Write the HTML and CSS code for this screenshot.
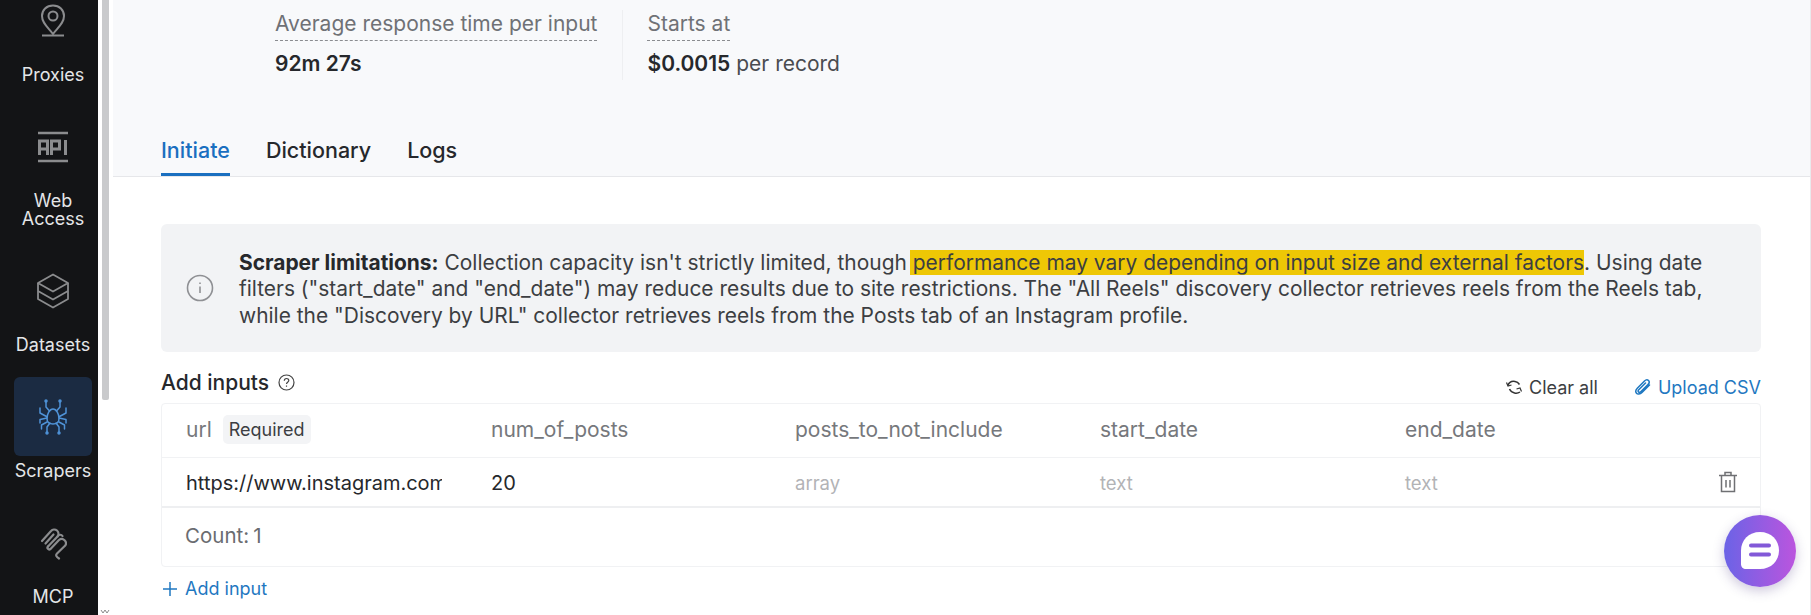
FILE: index.html
```html
<!DOCTYPE html>
<html lang="en">
<head>
  <meta charset="UTF-8">
  <title>Scraper</title>
  <link rel="stylesheet" href="styles.css">
</head>
<body>

<nav class="sidebar">
  <div class="nav-item">
    <div class="nav-tile">
      <svg width="26" height="33" viewBox="0 0 26 33" fill="none" stroke="#8b8c8e" stroke-width="2"><path d="M13 1.500C6.500 1.500 2 6 2 12c0 7 6 11.500 11 18 5-6.500 11-11 11-18 0-6-4.500-10.500-11-10.500z"/><circle cx="13" cy="12" r="4.500"/><path d="M2 31.500h22"/></svg>
    </div>
    <span class="nav-label">Proxies</span>
  </div>
  <div class="nav-item two-line">
    <div class="nav-tile">
      <svg width="32" height="32" viewBox="0 0 32 32" fill="none" stroke="#8b8c8e" stroke-width="2.400"><path d="M1 2h30M1 30h30"/><path d="M2.500 24V10h8v14M2.500 18h8M14.500 24V10h8v8h-8M28.500 9v15" stroke-width="3"/></svg>
    </div>
    <span class="nav-label">Web<br>Access</span>
  </div>
  <div class="nav-item">
    <div class="nav-tile">
      <svg width="34" height="36" viewBox="0 0 34 36" fill="none" stroke="#8b8c8e" stroke-width="1.800" stroke-linejoin="round"><path d="M17 1.500L32 10 17 18.500 2 10z"/><path d="M2 10v16l15 8.500L32 26V10"/><path d="M2 18l15 8.500L32 18"/></svg>
    </div>
    <span class="nav-label">Datasets</span>
  </div>
  <div class="nav-item active">
    <div class="nav-tile">
      <svg width="30" height="36" viewBox="0 0 30 36" fill="none" stroke="#4f93d8" stroke-width="1.500" stroke-linecap="round" stroke-linejoin="round"><path d="M15 10c-3.500 0-6 5-6 9.500 0 3.500 2.500 5.500 6 5.500s6-2 6-5.500C21 15 18.500 10 15 10z"/><path d="M8 2v6l3.500 4M22 2v6l-3.500 4M2 9v5l6.500 3.500M28 9v5l-6.500 3.500M2 24v-3.500L9 19M28 24v-3.500L21 19M3.500 30v-4l5.500-3M26.500 30v-4L21 23M9 34v-6l3-4M21 34v-6l-3-4"/><circle cx="8" cy="2" r="1"/><circle cx="22" cy="2" r="1"/><circle cx="9" cy="34" r="1"/><circle cx="21" cy="34" r="1"/></svg>
    </div>
    <span class="nav-label">Scrapers</span>
  </div>
  <div class="nav-item">
    <div class="nav-tile">
      <svg width="27" height="34" viewBox="0 0 27 34" fill="none" stroke="#8b8c8e" stroke-width="2.200" stroke-linecap="round" stroke-linejoin="round"><path d="M2 15l9-10a4.200 4.200 0 0 1 6.500 5.500L8 20.500"/><path d="M8 20.500c-1.500 1.500.5 4 2.500 2.500L19 14a4.200 4.200 0 0 1 6 5.800L17 27.500c-1.500 1.500-1 3 2 5"/><path d="M5.500 17.500l8-9"/><path d="M17.500 10.500c2-2.500 4-2 5-.5"/></svg>
    </div>
    <span class="nav-label">MCP</span>
  </div>
</nav>

<div class="gutter">
  <div class="scroll-thumb"></div>
  <svg class="collapse" width="10" height="6" viewBox="0 0 10 6" fill="none" stroke="#8a8a8a"><path d="M1 1l2 3 2-3M5 1l2 3 2-3"/></svg>
</div>

<main class="main">
  <section class="top">
    <div class="stats">
      <div class="stat">
        <span class="stat-label">Average response time per input</span>
        <span class="stat-value"><b>92m 27s</b></span>
      </div>
      <div class="stat">
        <span class="stat-label">Starts at</span>
        <span class="stat-value"><b>$0.0015</b> per record</span>
      </div>
    </div>
    <div class="tabs">
      <div class="tab active">Initiate</div>
      <div class="tab">Dictionary</div>
      <div class="tab">Logs</div>
    </div>
  </section>

  <section class="content">
    <div class="notice">
      <svg class="notice-icon" width="28" height="28" viewBox="0 0 28 28" fill="none" stroke="#8f9094" stroke-width="1.600"><circle cx="14" cy="14" r="12.500"/><path d="M14 12.500v6.500"/><path d="M14 8.500v1.500"/></svg>
      <p><b>Scraper limitations:</b> Collection capacity isn't strictly limited, though <mark>performance may vary depending on input size and external factors</mark>. Using date filters ("start_date" and "end_date") may reduce results due to site restrictions. The "All Reels" discovery collector retrieves reels from the Reels tab, while the "Discovery by URL" collector retrieves reels from the Posts tab of an Instagram profile.</p>
    </div>

    <div class="inputs-head">
      <h3>Add inputs
        <svg width="17" height="17" viewBox="0 0 17 17" fill="none" stroke="#444" stroke-width="1.200"><circle cx="8.500" cy="8.500" r="7.500"/><path d="M6.300 6.800c0-3 4.500-3 4.500-.2 0 1.700-2.300 1.700-2.300 3.400M8.500 11.500v1.200"/></svg>
      </h3>
      <div class="head-actions">
        <span class="action">
          <svg width="18" height="18" viewBox="0 0 18 18" fill="none" stroke="#333" stroke-width="1.500"><path d="M3 7.500C4 4.500 7 3 10 3.500c2 .3 3.500 1.500 4.500 3"/><path d="M15 14c-1.500 1-3.500 1.500-5.500 1-2.500-.5-4-2-5-4"/><path d="M1.500 4.500L3 8l3.500-1M16.500 13.500L15 10l-3.500 1" stroke-width="1.200"/></svg>
          Clear all
        </span>
        <span class="action link">
          <svg width="18" height="18" viewBox="0 0 18 18" fill="none" stroke="#1f78c1" stroke-width="1.500" stroke-linecap="round"><path d="M15.500 7L8 14.500c-2 2-4.500 2-5.500.8S1.500 12 3.500 10l7-7c1.500-1.500 3-1.500 4-.5s1 2.500-.5 4l-7 7c-1 1-2 1-2.500.5s-.5-1.500.5-2.500l6.500-6.500"/></svg>
          Upload CSV
        </span>
      </div>
    </div>

    <div class="table">
      <div class="row row-head">
        <div class="cell"><span>url</span><span class="chip">Required</span></div>
        <div class="cell">num_of_posts</div>
        <div class="cell">posts_to_not_include</div>
        <div class="cell">start_date</div>
        <div class="cell">end_date</div>
      </div>
      <div class="row row-data">
        <div class="cell cell-url"><span class="url-clip">https://www.instagram.com/</span></div>
        <div class="cell">20</div>
        <div class="cell hint">array</div>
        <div class="cell hint">text</div>
        <div class="cell hint">text</div>
        <svg class="trash" width="18" height="22" viewBox="0 0 18 22" fill="none" stroke="#6f7073" stroke-width="1.500"><path d="M0 4.500h18M6 4V1.500h6V4M2.500 5v15.500h13V5M7 9v7.500M11 9v7.500"/></svg>
      </div>
      <div class="row-count">Count:<span class="count-num">1</span></div>
    </div>

    <div class="add-input">
      <svg width="14" height="14" viewBox="0 0 14 14" fill="none" stroke="#1f78c1" stroke-width="1.500"><path d="M7 0v14M0 7h14"/></svg>
      Add input
    </div>
  </section>
</main>

<div class="chat">
  <svg width="40" height="40" viewBox="0 0 40 40"><path d="M20 1c11 0 19 8 19 18.500S31 38 20 38H6c-3 0-5-2-5-5V19.500C1 9 9 1 20 1z" fill="#fff"/><path d="M11 14.500h18M11 23.500h18" stroke="#8259d8" stroke-width="4" stroke-linecap="round"/></svg>
</div>

</body>
</html>
```

FILE: styles.css
```css
* {
  box-sizing: border-box;
}
html, body {
  height: 100%;
}
body {
  margin: 0;
  display: flex;
  height: 615px;
  overflow: hidden;
  background-color: #fff;
  font-family: Inter, "Liberation Sans", sans-serif;
  color: #26282c;
  border-right: 1px solid #e9eaec;
}

/* Barra lateral */
.sidebar {
  width: 98px;
  flex-shrink: 0;
  background-color: #131416;
  display: flex;
  flex-direction: column;
  align-items: center;
  gap: 19px;
  padding-left: 8px;
}
.nav-item {
  display: flex;
  flex-direction: column;
  align-items: center;
  height: 107px;
  flex-shrink: 0;
}
.nav-item:first-child {
  margin-top: -19px;
}
.nav-item.two-line {
  height: 125px;
}
.nav-tile {
  width: 78px;
  height: 79px;
  border-radius: 6px;
  display: flex;
  align-items: center;
  justify-content: center;
}
.nav-label {
  color: #e4e6e8;
  font-size: 18px;
  line-height: 18px;
  text-align: center;
  margin-top: 6px;
}
.nav-item.active .nav-tile {
  background-color: #1b2b42;
}

.gutter {
  width: 15px;
  flex-shrink: 0;
  padding-left: 4px;
  position: relative;
}
.scroll-thumb {
  width: 7px;
  height: 400px;
  background-color: #c9cacc;
  border-radius: 0 0 2px 2px;
}
.collapse {
  position: absolute;
  left: 2px;
  bottom: 0;
}

.main {
  flex: 1;
  min-width: 0;
}

/* Encabezado */
.top {
  height: 177px;
  background-color: #f8f9fb;
  border-bottom: 1px solid #e6e7ea;
  padding-left: 48px;
  display: flex;
  flex-direction: column;
}
.stats {
  display: flex;
  padding: 10px 0 0 114px;
}
.stat {
  display: flex;
  flex-direction: column;
  align-items: flex-start;
  height: 70px;
}
.stat + .stat {
  margin-left: 25px;
  padding-left: 24px;
  border-left: 1px solid #eeeff1;
}
.stat-label {
  font-size: 21px;
  line-height: 28px;
  padding-bottom: 2px;
  color: #6f7176;
  border-bottom: 1px dashed #8a8c90;
}
.stat-value {
  font-size: 21px;
  line-height: 28px;
  margin-top: 9px;
  color: #4a4c50;
}
.stat-value b {
  font-weight: 600;
  color: #26282c;
}
.tabs {
  display: flex;
  gap: 36px;
  margin-top: auto;
}
.tab {
  font-size: 21.500px;
  font-weight: 500;
  height: 48px;
  line-height: 40px;
  padding-top: 2px;
  color: #26282c;
  border-bottom: 3px solid transparent;
}
.tab.active {
  color: #1a6fc0;
  border-bottom-color: #1a6fc0;
}

/* Contenido */
.content {
  padding: 47px 49px 0 48px;
}
.notice {
  height: 128px;
  background-color: #f2f3f5;
  border-radius: 6px;
  display: flex;
  align-items: center;
  gap: 25px;
  padding: 0 40px 0 25px;
}
.notice-icon {
  flex-shrink: 0;
}
.notice p {
  margin: 3px 0 0;
  font-size: 20.950px;
  line-height: 26.500px;
  color: #3c3e42;
}
.notice b {
  font-weight: 700;
  color: #26282c;
}
.notice mark {
  background-color: #eec705;
  color: #3c3e42;
  margin-left: -3px;
  padding-left: 3px;
}
.inputs-head {
  display: flex;
  justify-content: space-between;
  height: 51px;
}
.inputs-head h3 {
  margin: 10px 0 0;
  font-size: 21px;
  line-height: 24px;
  font-weight: 500;
  display: flex;
  align-items: center;
  gap: 9px;
}
.head-actions {
  display: flex;
  gap: 36px;
  padding-top: 23px;
}
.action {
  display: flex;
  align-items: center;
  gap: 6px;
  height: 24px;
  font-size: 18px;
  color: #3c3e42;
}
.action.link {
  color: #1f78c1;
}
.table {
  height: 164px;
  border: 1px solid #f1f2f4;
  border-radius: 4px;
}
.row {
  display: grid;
  grid-template-columns: 305px 304px 305px 305px 1fr;
  align-items: center;
  position: relative;
}
.row-head {
  height: 54px;
  padding-bottom: 3px;
  border-bottom: 1px solid #f1f2f4;
}
.row-data {
  height: 50px;
  padding-top: 1px;
  border-bottom: 2px solid #eeeff1;
}
.cell {
  padding-left: 24px;
  font-size: 21px;
  color: #76787c;
  display: flex;
  align-items: center;
  min-width: 0;
}
.chip {
  background-color: #f3f4f6;
  color: #3c3e42;
  border-radius: 5px;
  font-size: 18px;
  line-height: 29px;
  padding: 0 6px;
  margin-left: 11px;
}
.cell-url {
  padding-right: 25px;
}
.url-clip {
  display: block;
  overflow: hidden;
  white-space: nowrap;
}
.row-data .cell {
  color: #26282c;
  font-size: 20px;
}
.row-data .hint {
  color: #b2b3b6;
  font-size: 18.500px;
}
.trash {
  position: absolute;
  right: 23px;
  top: 13px;
}
.row-count {
  padding: 16px 0 0 23px;
  font-size: 20.500px;
  line-height: 24px;
  color: #6a6c70;
}
.count-num {
  margin-left: 4px;
}
.add-input {
  display: flex;
  align-items: center;
  gap: 8px;
  margin-top: 10px;
  padding-left: 2px;
  font-size: 18px;
  line-height: 24px;
  color: #1f78c1;
}

/* Boton de chat */
.chat {
  position: absolute;
  left: 1724px;
  top: 515px;
  width: 72px;
  height: 72px;
  border-radius: 50%;
  background: linear-gradient(90deg, #6b63e6, #bb55de);
  box-shadow: 0 4px 12px rgba(60, 40, 120, 0.25);
  display: flex;
  align-items: center;
  justify-content: center;
}
```
